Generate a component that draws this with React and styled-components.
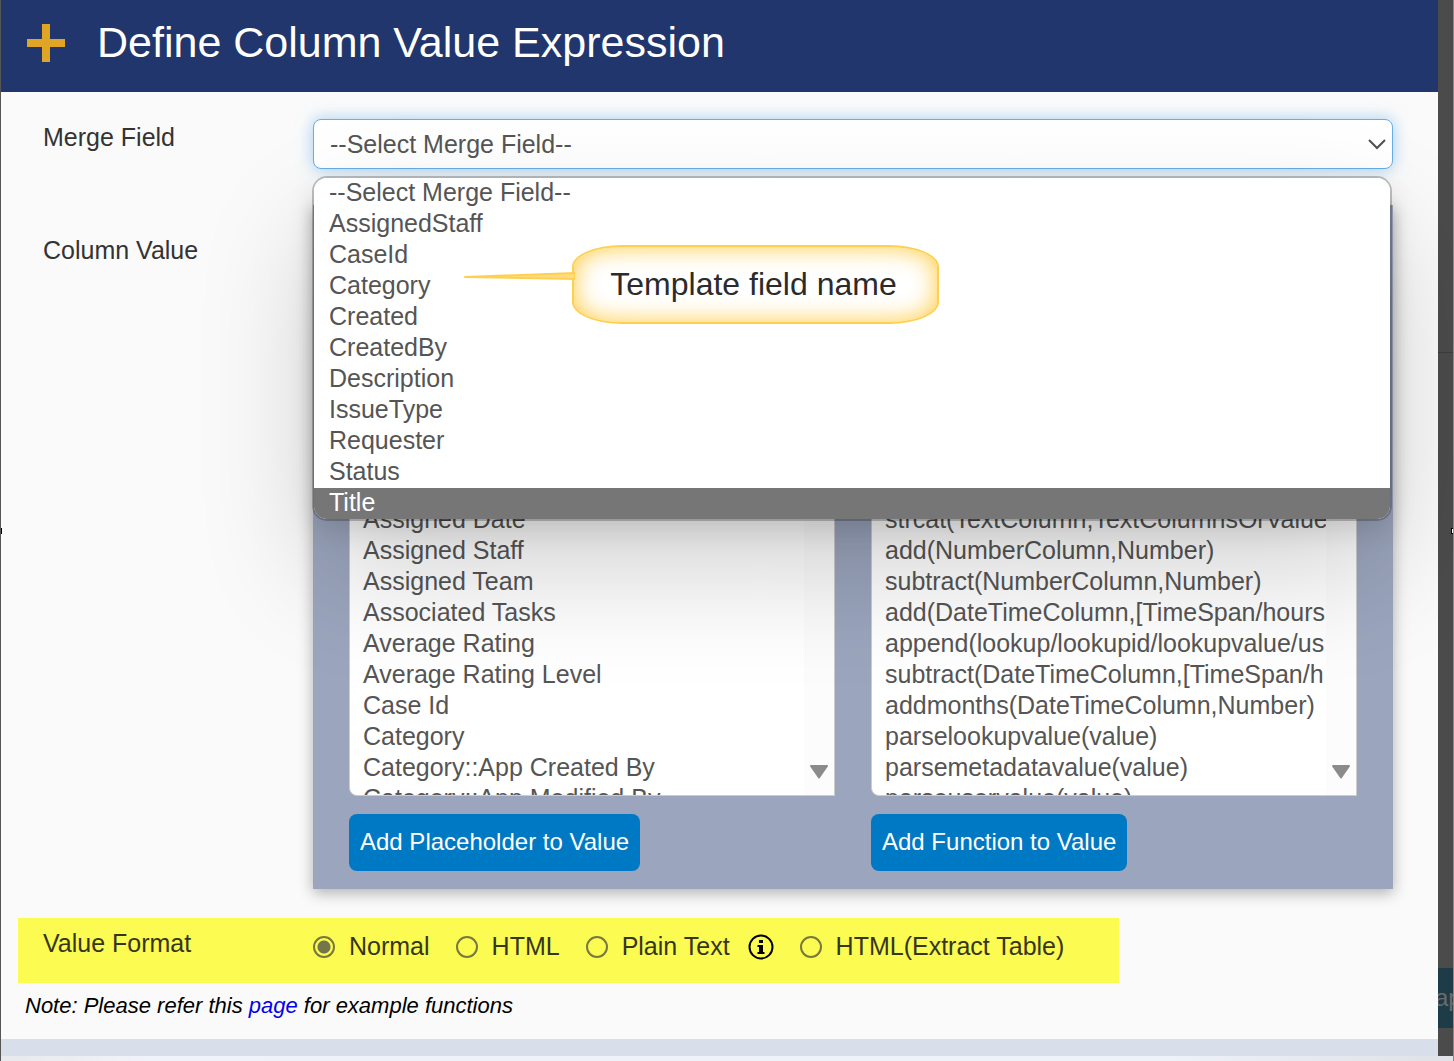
import React, { useState } from "react";
import styled, { createGlobalStyle } from "styled-components";

const GlobalStyle = createGlobalStyle`
  *, *::before, *::after { box-sizing: border-box; }
  body {
    margin: 0;
    background: #4b4b4b;
    font-family: "Liberation Sans", Arial, sans-serif;
    font-size: 25px;
    line-height: 31px;
    color: #333;
  }
`;

const Page = styled.div`
  position: relative;
  display: flex;
  flex-direction: column;
  min-height: 100vh;
  border-left: 1px solid #555;
  border-right: 1px solid #8a8a8a;
  overflow: hidden;
`;

const Stage = styled.div`
  display: flex;
  flex: 1;
`;

const Dialog = styled.main`
  flex: 1;
  min-width: 0;
  display: flex;
  flex-direction: column;
  background: #fafafa;
`;

const Backdrop = styled.aside`
  width: 15px;
  display: flex;
  flex-direction: column;
  overflow: hidden;
  background: #4b4b4b;
`;

const BackdropTop = styled.div`
  height: 353px;
  border-bottom: 1px solid #3c3c3c;
`;

const BackdropButton = styled.button`
  margin: auto 0 28px;
  height: 60px;
  padding: 0;
  border: 0;
  background: #1d3c48;
  color: #6b6b6b;
  font: 24px "Liberation Sans", Arial, sans-serif;
  text-align: left;
  text-indent: -3px;
`;

const Header = styled.header`
  display: flex;
  align-items: center;
  gap: 32px;
  height: 92px;
  padding: 0 26px 6px;
  background: #20366d;
  color: #fff;
`;

const Title = styled.h1`
  margin: 0;
  padding-bottom: 2px;
  font-size: 43px;
  font-weight: 400;
  line-height: 50px;
`;

const Form = styled.form`
  display: flex;
  flex-direction: column;
  padding-top: 27px;
`;

const Field = styled.div`
  display: grid;
  grid-template-columns: 270px minmax(0, 1fr);
  padding: 0 45px 36px 42px;
`;

const FieldName = styled.label`
  padding-top: ${(p) => (p.$low ? 30 : 3)}px;
`;

const Control = styled.div`
  position: relative;
`;

const MergeSelect = styled.select`
  display: block;
  appearance: none;
  width: 100%;
  height: 50px;
  padding: 0 48px 0 16px;
  border: 1px solid #66afe9;
  border-radius: 8px;
  background: #fff;
  box-shadow: 0 0 16px rgba(102, 175, 233, 0.6);
  color: #555;
  font: inherit;
  outline: none;
`;

const Chevron = styled.svg`
  position: absolute;
  top: 18px;
  right: 7px;
  pointer-events: none;
`;

const Popup = styled.div`
  position: absolute;
  z-index: 2;
  top: 59px;
  left: 1px;
  right: 3px;
  border-radius: 13px;
  background: #fff;
  box-shadow:
    0 0 0 2px rgba(0, 0, 0, 0.22),
    0 10px 28px rgba(0, 0, 0, 0.12),
    0 52px 116px rgba(0, 0, 0, 0.18);
`;

const Options = styled.ul`
  margin: 0;
  padding: 0;
  list-style: none;
  border-radius: 13px;
  overflow: hidden;
`;

const Option = styled.li`
  height: 31px;
  padding-left: 15px;
  line-height: 29px;
  color: ${(p) => (p.$active ? "#fff" : "#555")};
  background: ${(p) => (p.$active ? "#767676" : "#fff")};
`;

const Callout = styled.div`
  position: absolute;
  top: 67px;
  left: 258px;
  display: flex;
  align-items: center;
  justify-content: center;
  width: 367px;
  height: 79px;
  border: 2px solid #ffd04f;
  border-radius: 50px / 22px;
  background: #fff;
  box-shadow: inset 0 0 24px rgba(255, 196, 40, 0.9);
  color: #2b2b2b;
  font-size: 32px;
  padding-right: 4px;
`;

const Tail = styled.svg`
  position: absolute;
  top: 24px;
  left: -111px;
`;

const Builder = styled.section`
  display: grid;
  grid-template-columns: repeat(2, minmax(0, 1fr));
  gap: 36px;
  padding: 298px 36px 18px;
  background: #9ba5bd;
  box-shadow: 0 4px 14px rgba(0, 0, 0, 0.3);
`;

const Column = styled.div`
  display: flex;
  flex-direction: column;
  align-items: flex-start;
  gap: 18px;
`;

const ListFrame = styled.div`
  display: grid;
  grid-template-columns: minmax(0, 1fr) 30px;
  width: 100%;
  height: 293px;
  border: 1px solid #ccc;
  border-radius: 8px 8px 0 8px;
  background: #fff;
  overflow: hidden;
`;

const List = styled.select`
  width: 100%;
  height: 291px;
  padding: 1px 0 0;
  border: 0;
  background: transparent;
  color: #555;
  font: inherit;
  outline: none;
  overflow: hidden;
  scrollbar-width: none;

  option {
    height: 31px;
    min-height: 31px;
    padding: 0 0 0 13px;
    line-height: 31px;
  }
`;

const Track = styled.div`
  display: flex;
  align-items: flex-end;
  justify-content: center;
  padding-bottom: 16px;
  background: #fcfcfc;
`;

const Action = styled.button`
  height: 57px;
  padding: 0 11px 2px;
  border: 0;
  border-radius: 8px;
  background: #0079c4;
  color: #fff;
  font: 24px "Liberation Sans", Arial, sans-serif;
  white-space: nowrap;
`;

const FormatRow = styled.fieldset`
  display: grid;
  grid-template-columns: 270px auto;
  width: fit-content;
  height: 65px;
  margin: -7px 0 0 17px;
  padding: 10px 55px 0 25px;
  border: 0;
  background: #fbfb52;
  color: #36361c;
`;

const Choices = styled.div`
  display: flex;
  align-items: center;
  gap: 26px;
  height: 37px;
`;

const Choice = styled.label`
  display: flex;
  align-items: center;
  gap: 14px;
  white-space: nowrap;
`;

const Radio = styled.input`
  appearance: none;
  width: 22px;
  height: 22px;
  margin: 0;
  border: 2px solid #78783f;
  border-radius: 50%;

  &:checked {
    background: radial-gradient(circle, #75754c 6px, transparent 7px);
  }
`;

const Hint = styled.div`
  display: flex;
  align-items: center;
  gap: 18px;
`;

const Note = styled.p`
  margin: 7px 0 18px 24px;
  color: #000;
  font-size: 22px;
  font-style: italic;
`;

const Link = styled.a`
  color: #0000f0;
  text-decoration: none;
`;

const DialogFoot = styled.div`
  height: 17px;
  margin-top: auto;
  background: #d9dfea;
`;

const BottomEdge = styled.footer`
  height: 5px;
  background: linear-gradient(90deg, #e8e9ec, #f0f3f9 10%, #eef3f9 80%, #dfe2e7);
`;

const Handle = styled.span`
  position: absolute;
  top: 528px;
  left: ${(p) => (p.$end ? "auto" : "-2px")};
  right: ${(p) => (p.$end ? "-1px" : "auto")};
  width: 3px;
  height: 6px;
  border: 1px solid #000;
  background: #fff;
`;

const mergeFields = [
  "--Select Merge Field--", "AssignedStaff", "CaseId", "Category", "Created",
  "CreatedBy", "Description", "IssueType", "Requester", "Status", "Title",
];

const placeholders = [
  "Assigned Date", "Assigned Staff", "Assigned Team", "Associated Tasks",
  "Average Rating", "Average Rating Level", "Case Id", "Category",
  "Category::App Created By", "Category::App Modified By",
];

const functions = [
  "strcat(TextColumn,TextColumnsOrValue", "add(NumberColumn,Number)",
  "subtract(NumberColumn,Number)", "add(DateTimeColumn,[TimeSpan/hours",
  "append(lookup/lookupid/lookupvalue/us",
  "subtract(DateTimeColumn,[TimeSpan/h",
  "addmonths(DateTimeColumn,Number)", "parselookupvalue(value)",
  "parsemetadatavalue(value)", "parseuservalue(value)",
];

function Picker({ name, items, action }) {
  return (
    <Column>
      <ListFrame>
        <List multiple aria-label={name}>
          {items.map((item) => (
            <option key={item}>{item}</option>
          ))}
        </List>
        <Track>
          <svg width="20" height="14" viewBox="0 0 20 14" aria-hidden="true">
            <path d="M2 1h16L10 12.500z" fill="#8b8b8b" stroke="#8b8b8b" strokeWidth="2" strokeLinejoin="round" />
          </svg>
        </Track>
      </ListFrame>
      <Action type="button">{action}</Action>
    </Column>
  );
}

function FormatChoice({ label, value, onChange }) {
  return (
    <Choice>
      <Radio type="radio" name="format" checked={value === label} onChange={() => onChange(label)} />
      {label}
    </Choice>
  );
}

export default function App() {
  const [format, setFormat] = useState("Normal");
  return (
    <>
      <GlobalStyle />
      <Page>
        <Stage>
          <Dialog>
            <Header>
              <svg width="38" height="38" viewBox="0 0 38 38" aria-hidden="true">
                <path d="M15 0h8v15h15v8H23v15h-8V23H0v-8h15z" fill="#e0a526" />
              </svg>
              <Title>Define Column Value Expression</Title>
            </Header>
            <Form>
              <Field>
                <FieldName htmlFor="merge-field">Merge Field</FieldName>
                <Control>
                  <MergeSelect id="merge-field" defaultValue={mergeFields[0]}>
                    {mergeFields.map((f) => (
                      <option key={f}>{f}</option>
                    ))}
                  </MergeSelect>
                  <Chevron width="18" height="14" viewBox="0 0 18 14" aria-hidden="true">
                    <path d="M1 3l8 8 8-8" fill="none" stroke="#505050" strokeWidth="2" />
                  </Chevron>
                  <Popup>
                    <Options role="listbox" aria-label="Merge fields">
                      {mergeFields.map((f) => (
                        <Option key={f} role="option" $active={f === "Title"} aria-selected={f === "Title"}>
                          {f}
                        </Option>
                      ))}
                    </Options>
                    <Callout>
                      <Tail width="112" height="10" viewBox="0 0 112 10" aria-hidden="true">
                        <path d="M2 6L112 2v6L2 6z" fill="#ffdc80" stroke="#ffd04f" strokeWidth="2" strokeLinejoin="round" />
                      </Tail>
                      Template field name
                    </Callout>
                  </Popup>
                </Control>
              </Field>
              <Field>
                <FieldName as="div" $low>Column Value</FieldName>
                <Builder>
                  <Picker name="Placeholders" items={placeholders} action="Add Placeholder to Value" />
                  <Picker name="Functions" items={functions} action="Add Function to Value" />
                </Builder>
              </Field>
              <FormatRow aria-labelledby="format-name">
                <div id="format-name">Value Format</div>
                <Choices>
                  <FormatChoice label="Normal" value={format} onChange={setFormat} />
                  <FormatChoice label="HTML" value={format} onChange={setFormat} />
                  <Hint>
                    <FormatChoice label="Plain Text" value={format} onChange={setFormat} />
                    <svg width="26" height="26" viewBox="0 0 26 26" aria-hidden="true">
                      <circle cx="13" cy="13" r="11.500" fill="none" stroke="#000" strokeWidth="2" />
                      <path d="M11 6h4v3h-4zM9.500 11H15v7h1.500v2h-7v-2H11v-5H9.500z" fill="#000" />
                    </svg>
                  </Hint>
                  <FormatChoice label="HTML(Extract Table)" value={format} onChange={setFormat} />
                </Choices>
              </FormatRow>
            </Form>
            <Note>
              Note: Please refer this <Link href="#examples">page</Link> for example functions
            </Note>
            <DialogFoot />
          </Dialog>
          <Backdrop>
            <BackdropTop />
            <BackdropButton type="button">ap</BackdropButton>
          </Backdrop>
        </Stage>
        <BottomEdge />
        <Handle />
        <Handle $end />
      </Page>
    </>
  );
}
